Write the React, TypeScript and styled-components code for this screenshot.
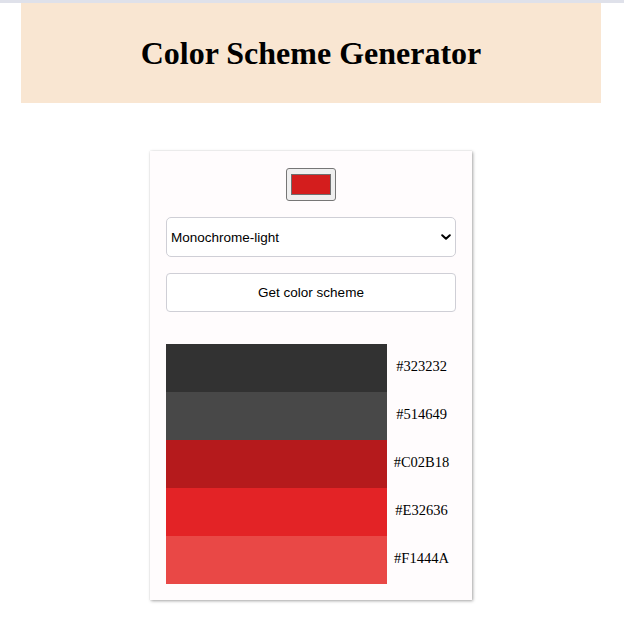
import React, { useState } from "react";
import styled, { createGlobalStyle } from "styled-components";

const GlobalStyle = createGlobalStyle`
  html, body {
    margin: 0;
    padding: 0;
    background: #ffffff;
  }
  body {
    font-family: "Liberation Serif", "Times New Roman", serif;
    color: #000;
  }
`;

const TopLine = styled.div`
  height: 3px;
  background: #dfe1ea;
`;

const Page = styled.div`
  display: flex;
  flex-direction: column;
  align-items: flex-start;
  padding: 0 0 30px 21px;
`;

const Header = styled.header`
  width: 580px;
  height: 100px;
  background: #f9e6d2;
  display: flex;
  align-items: center;
  justify-content: center;
`;

const Title = styled.h1`
  margin: 0;
  font-family: "Liberation Serif", "Times New Roman", serif;
  font-size: 32px;
  font-weight: bold;
  color: #000;
`;

const Card = styled.main`
  margin: 48px 0 0 129px;
  width: 322px;
  box-sizing: border-box;
  padding: 17px 16px 16px;
  background: #fffcfd;
  box-shadow: 1px 1px 3px rgba(0, 0, 0, 0.35), 0 0 1px rgba(0, 0, 0, 0.12);
  display: flex;
  flex-direction: column;
  align-items: center;
`;

const ColorInput = styled.input`
  -webkit-appearance: none;
  appearance: none;
  width: 50px;
  height: 33px;
  box-sizing: border-box;
  padding: 0;
  margin: 0;
  border: 1px solid #767676;
  border-radius: 3px;
  background: #efefef;
  cursor: pointer;

  &::-webkit-color-swatch-wrapper {
    padding: 5px 4px;
  }
  &::-webkit-color-swatch {
    border: 1px solid #6f6f6f;
    border-radius: 0;
  }
`;

const SelectWrap = styled.div`
  position: relative;
  width: 100%;
  margin-top: 16px;
`;

const Select = styled.select`
  -webkit-appearance: none;
  appearance: none;
  width: 100%;
  height: 40px;
  box-sizing: border-box;
  padding: 0 30px 0 4px;
  border: 1px solid #cfcfd6;
  border-radius: 5px;
  background: #ffffff;
  font-family: "Liberation Sans", Arial, sans-serif;
  font-size: 13.5px;
  color: #000;
  outline: none;
`;

const Chevron = styled.svg`
  position: absolute;
  right: 5px;
  top: 50%;
  transform: translateY(-50%);
  pointer-events: none;
`;

const Button = styled.button`
  width: 100%;
  height: 39px;
  margin-top: 16px;
  box-sizing: border-box;
  border: 1px solid #cfcfd6;
  border-radius: 4px;
  background: #ffffff;
  font-family: "Liberation Sans", Arial, sans-serif;
  font-size: 13.5px;
  color: #000;
  cursor: pointer;
`;

const Scheme = styled.div`
  margin-top: 32px;
  width: 100%;
  display: flex;
  flex-direction: column;
`;

const Row = styled.div`
  display: grid;
  grid-template-columns: 221px 1fr;
  height: 48px;
`;

const Swatch = styled.div<{ $color: string }>`
  background: ${(p) => p.$color};
`;

const Hex = styled.span`
  display: flex;
  align-items: center;
  justify-content: center;
  padding-bottom: 3px;
  font-family: "Liberation Serif", "Times New Roman", serif;
  font-size: 14.5px;
  color: #000;
`;

const colors = [
  { hex: "#323232", shown: "#323232" },
  { hex: "#514649", shown: "#484848" },
  { hex: "#C02B18", shown: "#b51a1c" },
  { hex: "#E32636", shown: "#e32326" },
  { hex: "#F1444A", shown: "#e94846" },
];

export default function App() {
  const [color, setColor] = useState("#d41d1d");
  const [mode, setMode] = useState("monochrome-light");
  return (
    <>
      <GlobalStyle />
      <TopLine />
      <Page>
        <Header>
          <Title>Color Scheme Generator</Title>
        </Header>
        <Card>
          <ColorInput
            type="color"
            value={color}
            onChange={(e) => setColor(e.target.value)}
          />
          <SelectWrap>
            <Select value={mode} onChange={(e) => setMode(e.target.value)}>
              <option value="monochrome">Monochrome</option>
              <option value="monochrome-dark">Monochrome-dark</option>
              <option value="monochrome-light">Monochrome-light</option>
              <option value="analogic">Analogic</option>
              <option value="complement">Complement</option>
              <option value="analogic-complement">Analogic-complement</option>
              <option value="triad">Triad</option>
              <option value="quad">Quad</option>
            </Select>
            <Chevron width="10" height="8" viewBox="0 0 10 8">
              <path
                d="M1.2 2.2 L5 5.8 L8.8 2.2"
                fill="none"
                stroke="#000"
                strokeWidth="2"
                strokeLinecap="round"
                strokeLinejoin="round"
              />
            </Chevron>
          </SelectWrap>
          <Button type="button">Get color scheme</Button>
          <Scheme>
            {colors.map((c) => (
              <Row key={c.hex}>
                <Swatch $color={c.shown} />
                <Hex>{c.hex}</Hex>
              </Row>
            ))}
          </Scheme>
        </Card>
      </Page>
    </>
  );
}
